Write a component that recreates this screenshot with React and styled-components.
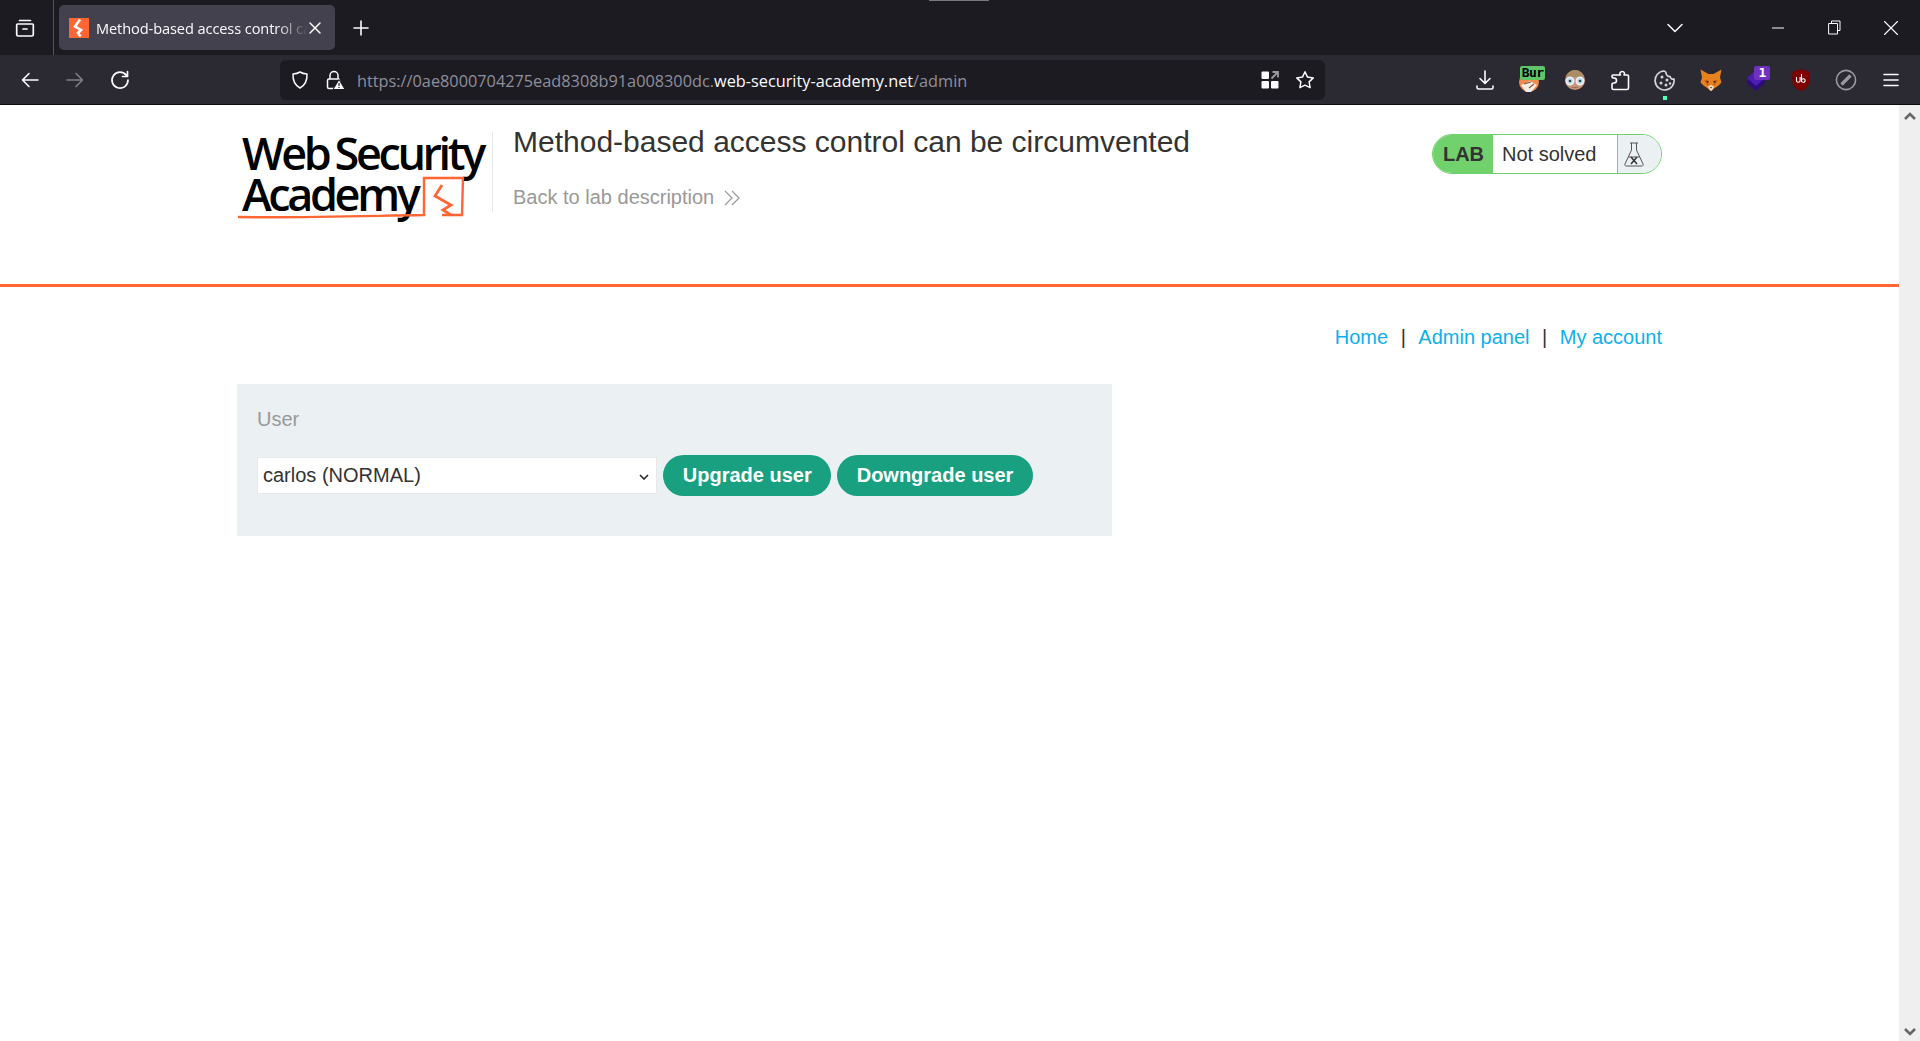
import React from 'react';
import styled, { createGlobalStyle } from 'styled-components';

const Global = createGlobalStyle`
  html, body { margin: 0; padding: 0; height: 100%; overflow: hidden; background: #fff; }
  #root { height: 100%; }
  * { box-sizing: border-box; }
`;

const Window = styled.div`
  height: 1041px;
  display: flex;
  flex-direction: column;
  font-family: "Liberation Sans", Arial, sans-serif;
`;

const TabStrip = styled.div`
  position: relative;
  height: 55px;
  background: #1c1b22;
  display: flex;
  align-items: center;
  color: #fbfbfe;
`;

const DragMark = styled.div`
  position: absolute;
  top: 0;
  left: 929px;
  width: 60px;
  height: 1px;
  background: #77777c;
`;

const TabListButton = styled.div`
  width: 54px;
  height: 55px;
  border-right: 1px solid #55545c;
  display: flex;
  align-items: center;
  justify-content: center;
  flex: none;
  padding-right: 4px;
`;

const Tab = styled.div`
  width: 276px;
  height: 45px;
  margin-left: 5px;
  background: #42414d;
  border-radius: 5px;
  display: flex;
  align-items: center;
  padding: 0 10px;
  flex: none;
`;

const TabTitle = styled.span`
  width: 212px;
  margin-left: 7px;
  overflow: hidden;
  white-space: nowrap;
  font: 14.6px "Open Sans", sans-serif;
  letter-spacing: -0.1px;
  color: #fbfbfe;
  mask-image: linear-gradient(to right, #000 180px, transparent 212px);
`;

const Spacer = styled.div`
  flex: 1;
`;

const StripIcon = styled.div`
  width: ${p => p.$w || 56}px;
  margin-left: ${p => p.$ml || 0}px;
  flex: none;
  display: flex;
  justify-content: center;
`;

const Toolbar = styled.div`
  height: 50px;
  padding-top: 1px;
  background: #2b2a33;
  display: flex;
  align-items: center;
  border-bottom: 1px solid #0c0c0d;
  color: #fbfbfe;
  flex: none;
`;

const NavIcon = styled.div`
  width: 45px;
  margin-left: ${p => p.$ml || 0}px;
  display: flex;
  justify-content: center;
  flex: none;
  opacity: ${p => (p.$dim ? 0.4 : 1)};
`;

const UrlBar = styled.div`
  width: 1045px;
  height: 40px;
  margin-left: 138px;
  background: #1c1b22;
  border-radius: 6px;
  display: flex;
  align-items: center;
  padding: 0 3px 0 2px;
  flex: none;
`;

const UrlIcon = styled.div`
  width: 35px;
  flex: none;
  display: flex;
  justify-content: center;
`;

const UrlText = styled.div`
  flex: 1;
  margin-left: 5px;
  padding-top: 2px;
  font: 16.3px "Open Sans", sans-serif;
  white-space: nowrap;
  color: #8f8f9d;
`;

const UrlHost = styled.span`
  color: #fbfbfe;
`;

const ExtensionTray = styled.div`
  margin-left: 137px;
  display: flex;
  align-items: center;
`;

const TrayIcon = styled.div`
  position: relative;
  width: 45.2px;
  height: 34px;
  display: flex;
  align-items: center;
  justify-content: center;
  flex: none;
`;

const TrayBadge = styled.span`
  position: absolute;
  top: 3px;
  left: ${p => p.$left}px;
  min-width: ${p => p.$w}px;
  height: 14px;
  border-radius: 2px;
  background: ${p => p.$bg};
  color: ${p => p.$fg};
  font: bold 13px/14px "DejaVu Sans Mono", monospace;
  letter-spacing: -0.6px;
  text-align: center;
`;

const AttentionDot = styled.span`
  position: absolute;
  bottom: -3px;
  left: 20px;
  width: 4px;
  height: 4px;
  background: #54ffbd;
`;

const Viewport = styled.div`
  flex: 1;
  display: flex;
  min-height: 0;
`;

const Page = styled.main`
  flex: 1;
  background: #fff;
  color: #333332;
  font-size: 20px;
`;

const ScrollTrack = styled.div`
  width: 21px;
  flex: none;
  background: #efefef;
  display: flex;
  flex-direction: column;
  justify-content: space-between;
  align-items: center;
  padding: 7px 0 5px;
`;

const LabHeader = styled.header`
  height: 182px;
  border-bottom: 3px solid #ff6633;
  padding: 0 237px;
  display: flex;
  align-items: flex-start;
`;

const Logo = styled.div`
  position: relative;
  width: 256px;
  height: 80px;
  margin-top: 27px;
  padding-left: 5px;
  border-right: 1px solid #e6e8ea;
  flex: none;
  font-family: "Open Sans", sans-serif;
  font-weight: 600;
  font-size: 45px;
  line-height: 41px;
  color: #000;
  letter-spacing: -3.4px;
  word-spacing: -2px;
  white-space: nowrap;
`;

const LogoLine = styled.div``;

const LogoDrawing = styled.svg`
  position: absolute;
  left: 0;
  top: 0;
`;

const LabTitle = styled.div`
  margin-left: 20px;
  flex: 1;
`;

const Title = styled.h2`
  margin: 19px 0 0;
  font-size: 30px;
  line-height: 35px;
  font-weight: normal;
  color: #333332;
`;

const BackLink = styled.a`
  display: flex;
  align-items: center;
  gap: 10px;
  margin-top: 27px;
  color: #999;
  font-size: 20px;
  line-height: 23px;
`;

const StatusWidget = styled.div`
  width: 230px;
  height: 40px;
  margin-top: 29px;
  border: 1px solid #70d16d;
  border-radius: 20px;
  display: flex;
  overflow: hidden;
  flex: none;
`;

const LabPill = styled.span`
  width: 60px;
  background: #70d16d;
  font-weight: bold;
  font-size: 20px;
  line-height: 39px;
  text-align: center;
  color: #333332;
  padding-left: 1px;
`;

const StatusText = styled.span`
  width: 125px;
  padding-left: 9px;
  line-height: 38px;
  border-right: 1px solid #70d16d;
  color: #333332;
`;

const FlaskBox = styled.span`
  flex: 1;
  background: #ebf0f2;
  display: flex;
  align-items: center;
  justify-content: center;
  padding-right: 12px;
`;

const Content = styled.section`
  padding: 0 237px;
`;

const TopLinks = styled.nav`
  display: flex;
  justify-content: flex-end;
  align-items: center;
  height: 97px;
  padding-top: 3px;
`;

const TopLink = styled.a`
  color: #0cb0ea;
`;

const Sep = styled.span`
  margin: 0 12.5px;
  color: #333332;
`;

const AdminPanel = styled.form`
  width: 875px;
  height: 152px;
  background: #ebf0f2;
  padding: 21px 20px 0;
`;

const FieldLabel = styled.label`
  display: block;
  color: #999;
  line-height: 28px;
`;

const FieldRow = styled.div`
  display: flex;
  align-items: center;
  margin-top: 22px;
`;

const UserSelect = styled.select`
  appearance: none;
  width: 400px;
  height: 37px;
  font: 20px "Liberation Sans", Arial, sans-serif;
  color: #333332;
  background: #fff url("data:image/svg+xml,%3Csvg xmlns='http://www.w3.org/2000/svg' width='10' height='6'%3E%3Cpath d='M1 1l4 4 4-4' fill='none' stroke='%23222' stroke-width='1.5'/%3E%3C/svg%3E") no-repeat 381px 16px;
  border: 1px solid #e6e8ea;
  border-radius: 0;
  padding: 0 0 1px 5px;
  margin-right: 6px;
`;

const ActionButton = styled.button`
  height: 41px;
  border: 0;
  border-radius: 21px;
  padding: 0 19.75px;
  margin-right: 5.5px;
  background: #18a081;
  color: #fff;
  font: bold 20px "Liberation Sans", Arial, sans-serif;
`;

const FaviconBox = styled.svg`
  flex: none;
`;

const Glyph = ({ w = 20, h = 20, vb = '0 0 20 20', sw = 1.7, children }) => (
  <svg width={w} height={h} viewBox={vb} fill="none" stroke="currentColor" strokeWidth={sw} strokeLinecap="round" strokeLinejoin="round">
    {children}
  </svg>
);

const Favicon = () => (
  <FaviconBox width="20" height="20" viewBox="0 0 20 20">
    <rect width="20" height="20" fill="#ff6633" />
    <path d="M11 1.500 6 8.500l6 3.500-3 3 2.500 3.500" fill="none" stroke="#fff" strokeWidth="2.600" />
  </FaviconBox>
);

const Fox = () => (
  <svg width="24" height="24" viewBox="0 0 24 24">
    <path d="M1.500 1.500 9.500 6h5l8-4.500-1.500 8 1.500 5-3 3-5 3.500-2.500 2-2.500-2-5-3.500-3-3 1.500-5z" fill="#e8821e" />
    <path d="M5 12l5 1-1 5zM19 12l-5 1 1 5z" fill="#c05a12" />
    <path d="M9 18.500 12 17l3 1.500-1.500 3.500-1.500 1-1.500-1z" fill="#f3d9bf" />
    <path d="M7.500 12.500l2.200 1-1.700 1.300zM16.500 12.500l-2.200 1 1.700 1.300z" fill="#23232b" />
    <path d="M11 19h2l-1 1.500z" fill="#222" />
  </svg>
);

const Owl = () => (
  <svg width="24" height="24" viewBox="0 0 24 24">
    <circle cx="12" cy="12" r="10" fill="#c99578" />
    <path d="M3 11a9 9 0 0 1 18 0c-4-3-14-3-18 0z" fill="#a98d64" />
    <circle cx="7" cy="13" r="3.700" fill="#bfdfe4" stroke="#eef" strokeWidth="1.500" />
    <circle cx="17" cy="13" r="3.700" fill="#bfdfe4" stroke="#eef" strokeWidth="1.500" />
    <circle cx="7" cy="13" r="1.300" fill="#345" />
    <circle cx="17" cy="13" r="1.300" fill="#345" />
    <path d="M9 19c2 1 4 1 6 0" stroke="#94604a" strokeWidth="1" fill="none" />
  </svg>
);

const Burp = () => (
  <svg width="24" height="24" viewBox="0 0 24 24">
    <circle cx="11" cy="14" r="10" fill="#ee8c4e" />
    <path d="M3 17l9-4 7 4-6 7H8z" fill="#f4ede6" />
    <path d="M6 16l7-2M11 20l5-4" stroke="#8a5a3c" strokeWidth="1.300" />
  </svg>
);

const Stack = () => (
  <svg width="22" height="24" viewBox="0 0 22 24">
    <path d="M11 5l10 9-10 9L1 14z" fill="#2c0d7d" />
    <path d="M11 2l9 8-9 8-9-8z" fill="#4b1db0" />
  </svg>
);

const UBlock = () => (
  <svg width="20" height="24" viewBox="0 0 20 24">
    <path d="M10 1l8.500 3v9c0 5-4.500 8-8.500 10-4-2-8.500-5-8.500-10V4z" fill="#800000" stroke="#5c1010" strokeWidth="0.600" />
    <path d="M5.500 9v3.500a1.800 1.800 0 0 0 3.600 0V9M10.500 6v8M10.500 12.500a1.800 1.800 0 1 0 3.600 0 1.800 1.800 0 0 0-3.600 0" fill="none" stroke="#fff" strokeWidth="1.100" />
  </svg>
);

const Compass = () => (
  <svg width="22" height="22" viewBox="0 0 22 22" fill="none">
    <circle cx="11" cy="11" r="9.600" stroke="#9a9aa0" strokeWidth="1.600" />
    <path d="M6.500 15.500 15.500 6.500" stroke="#9a9aa0" strokeWidth="3.200" />
  </svg>
);

const Cookie = () => (
  <Glyph w={22} h={24} vb="0 0 22 24" sw={1.700}>
    <g stroke="#d4d4d8">
      <path d="M10 3a9.500 9.500 0 1 0 10 8c-2 .5-3.500-.5-3.800-2.400C14 8.800 12 7 12 4.800 11.500 4 11 3 10 3z" />
    </g>
    <g fill="#d4d4d8" stroke="none">
      <circle cx="8" cy="9" r="1.500" />
      <circle cx="13" cy="12" r="1.500" />
      <circle cx="7" cy="15" r="1.500" />
      <circle cx="12" cy="17" r="1.500" />
      <circle cx="16" cy="15.500" r="1.200" />
    </g>
  </Glyph>
);

export default function App() {
  return (
    <Window>
      <Global />
      <TabStrip>
        <DragMark />
        <TabListButton>
          <Glyph>
            <path d="M4.500 2.500h11M2.500 6h15a.8.8 0 0 1 .8.8v9.700a1.500 1.500 0 0 1-1.500 1.500H3.200a1.500 1.500 0 0 1-1.500-1.500V6.800A.8.8 0 0 1 2.500 6zM8 11h4" />
          </Glyph>
        </TabListButton>
        <Tab>
          <Favicon />
          <TabTitle>Method-based access control can be circumvented</TabTitle>
          <Glyph w={14} h={14} vb="0 0 14 14" sw={1.500}>
            <path d="M2 2l10 10M12 2 2 12" />
          </Glyph>
        </Tab>
        <StripIcon $w={52}>
          <Glyph w={16} h={16} vb="0 0 16 16" sw={1.600}>
            <path d="M8 1v14M1 8h14" />
          </Glyph>
        </StripIcon>
        <Spacer />
        <StripIcon $w={16}>
          <Glyph w={16} h={10} vb="0 0 16 10" sw={1.500}>
            <path d="M1 1.500 8 8.500l7-7" />
          </Glyph>
        </StripIcon>
        <StripIcon $ml={67} $w={56}>
          <Glyph w={12} h={12} vb="0 0 12 12" sw={1.100}>
            <path d="M0 6h12" />
          </Glyph>
        </StripIcon>
        <StripIcon $w={56}>
          <Glyph w={13} h={15} vb="0 0 13 15" sw={1}>
            <path d="M3.500 3V1h8.500v9.500h-2.500M1 3.500h8.500V14H1z" />
          </Glyph>
        </StripIcon>
        <StripIcon $w={58}>
          <Glyph w={14} h={14} vb="0 0 14 14" sw={1.100}>
            <path d="M.5.5l13 13M13.500.5l-13 13" />
          </Glyph>
        </StripIcon>
      </TabStrip>
      <Toolbar>
        <NavIcon $ml={7}>
          <Glyph w={20} h={20} sw={1.600}>
            <path d="M18 10H2.500M9 3.500 2.500 10 9 16.500" />
          </Glyph>
        </NavIcon>
        <NavIcon $dim>
          <Glyph w={20} h={20} sw={1.600}>
            <path d="M2 10h15.500M11 3.500l6.500 6.500-6.500 6.500" />
          </Glyph>
        </NavIcon>
        <NavIcon>
          <Glyph w={20} h={20} sw={1.700}>
            <path d="M16.500 5.500A8 8 0 1 0 18 10M17.500 1.500v5h-5" />
          </Glyph>
        </NavIcon>
        <UrlBar>
          <UrlIcon>
            <Glyph w={20} h={20} sw={1.500}>
              <path d="M10 2c2 1.200 4.500 1.800 7 2 .3 6-1.500 11-7 14C4.500 15 2.700 10 3 4c2.500-.2 5-.8 7-2z" />
            </Glyph>
          </UrlIcon>
          <UrlIcon>
            <svg width="20" height="20" viewBox="0 0 20 20">
              <path d="M5 9V5.500a4 4 0 0 1 8 0V9" fill="none" stroke="#fbfbfe" strokeWidth="1.500" />
              <rect x="2.500" y="9" width="12" height="9.500" rx="1.500" fill="none" stroke="#fbfbfe" strokeWidth="1.500" />
              <path d="M14 9.500l6 10H8z" fill="#fbfbfe" stroke="#1c1b22" strokeWidth="1" />
              <path d="M14 13v3M14 17v1" stroke="#1c1b22" strokeWidth="1.200" />
            </svg>
          </UrlIcon>
          <UrlText>
            https://0ae8000704275ead8308b91a008300dc.<UrlHost>web-security-academy.net</UrlHost>/admin
          </UrlText>
          <UrlIcon>
            <svg width="18" height="18" viewBox="0 0 18 18">
              <rect x="0.500" y="0.500" width="7.500" height="7.500" rx="1" fill="#fbfbfe" />
              <rect x="0.500" y="10" width="7.500" height="7.500" rx="1" fill="#fbfbfe" />
              <rect x="10" y="10" width="7.500" height="7.500" rx="1" fill="#fbfbfe" />
              <path d="M10.500 7.500 16.500 1.500M11.500 1h5.500v5.500" fill="none" stroke="#9a9aa0" strokeWidth="1.800" />
            </svg>
          </UrlIcon>
          <UrlIcon>
            <Glyph w={20} h={20} sw={1.500}>
              <path d="M10 1.800l2.500 5.300 5.800.8-4.200 4 1 5.800L10 15.200l-5.100 2.500 1-5.800-4.200-4 5.800-.8z" />
            </Glyph>
          </UrlIcon>
        </UrlBar>
        <ExtensionTray>
          <TrayIcon>
            <Glyph w={20} h={22} vb="0 0 20 22" sw={1.600}>
              <path d="M10 2v12M5 9.500l5 5 5-5M2 17v1.500a1.500 1.500 0 0 0 1.500 1.500h13a1.500 1.500 0 0 0 1.500-1.500V17" />
            </Glyph>
          </TrayIcon>
          <TrayIcon>
            <Burp />
            <TrayBadge $left={13} $w={25} $bg="#5fc567" $fg="#000">Bur</TrayBadge>
          </TrayIcon>
          <TrayIcon><Owl /></TrayIcon>
          <TrayIcon>
            <Glyph w={20} h={22} vb="0 0 20 22" sw={1.600}>
              <path d="M8 6h2.500a2 2 0 0 1-.5-2.200A2.500 2.500 0 0 1 14.500 4c.2 1-.2 1.500-.5 2H17.500a1 1 0 0 1 1 1v12a1.500 1.500 0 0 1-1.500 1.500H3.500A1.500 1.500 0 0 1 2 19v-3.500c0-1 1-1.500 2-1.500a2.500 2.500 0 0 0 0-5c-1 0-2-.5-2-1.500V7a1 1 0 0 1 1-1z" />
            </Glyph>
          </TrayIcon>
          <TrayIcon>
            <Cookie />
            <AttentionDot />
          </TrayIcon>
          <TrayIcon><Fox /></TrayIcon>
          <TrayIcon>
            <Stack />
            <TrayBadge $left={21} $w={16} $bg="#7030c0" $fg="#fff">1</TrayBadge>
          </TrayIcon>
          <TrayIcon><UBlock /></TrayIcon>
          <TrayIcon><Compass /></TrayIcon>
          <TrayIcon>
            <Glyph w={16} h={16} vb="0 0 16 16" sw={1.600}>
              <path d="M1 2.500h14M1 8h14M1 13.500h14" />
            </Glyph>
          </TrayIcon>
        </ExtensionTray>
      </Toolbar>
      <Viewport>
        <Page>
          <LabHeader>
            <Logo>
              <LogoLine>Web Security</LogoLine>
              <LogoLine>Academy</LogoLine>
              <LogoDrawing width="240" height="92" viewBox="0 0 240 92" fill="none" stroke="#ff6633">
                <path d="M1 85c60 1 125-1 186-2V46h39l-1 37h-20" strokeWidth="2.400" />
                <path d="M205 53l-7 11 16 9-8 5 8 5" strokeWidth="2.800" />
              </LogoDrawing>
            </Logo>
            <LabTitle>
              <Title>Method-based access control can be circumvented</Title>
              <BackLink>
                Back to lab description
                <svg width="17" height="16" viewBox="0 0 17 16" fill="none" stroke="#999" strokeWidth="1.200">
                  <path d="M1 1l7 7-7 7M8 1l7 7-7 7" />
                </svg>
              </BackLink>
            </LabTitle>
            <StatusWidget>
              <LabPill>LAB</LabPill>
              <StatusText>Not solved</StatusText>
              <FlaskBox>
                <svg width="20" height="25" viewBox="0 0 20 25" fill="none" stroke="#555" strokeWidth="1">
                  <path d="M6 1h8M7.500 1v7L1 22a1.300 1.300 0 0 0 1.200 2h15.600a1.300 1.300 0 0 0 1.200-2L12.500 8V1M4.500 15h11" />
                  <path d="M7 15l6 7M13 15l-6 7" stroke="#333" strokeWidth="1.500" />
                </svg>
              </FlaskBox>
            </StatusWidget>
          </LabHeader>
          <Content>
            <TopLinks>
              <TopLink>Home</TopLink>
              <Sep>|</Sep>
              <TopLink>Admin panel</TopLink>
              <Sep>|</Sep>
              <TopLink>My account</TopLink>
            </TopLinks>
            <AdminPanel>
              <FieldLabel>User</FieldLabel>
              <FieldRow>
                <UserSelect defaultValue="carlos">
                  <option value="carlos">carlos (NORMAL)</option>
                </UserSelect>
                <ActionButton type="button">Upgrade user</ActionButton>
                <ActionButton type="button">Downgrade user</ActionButton>
              </FieldRow>
            </AdminPanel>
          </Content>
        </Page>
        <ScrollTrack>
          <svg width="12" height="8" viewBox="0 0 12 8" fill="none" stroke="#666" strokeWidth="2.600">
            <path d="M1 7l5-5 5 5" />
          </svg>
          <svg width="12" height="8" viewBox="0 0 12 8" fill="none" stroke="#666" strokeWidth="2.600">
            <path d="M1 1l5 5 5-5" />
          </svg>
        </ScrollTrack>
      </Viewport>
    </Window>
  );
}
